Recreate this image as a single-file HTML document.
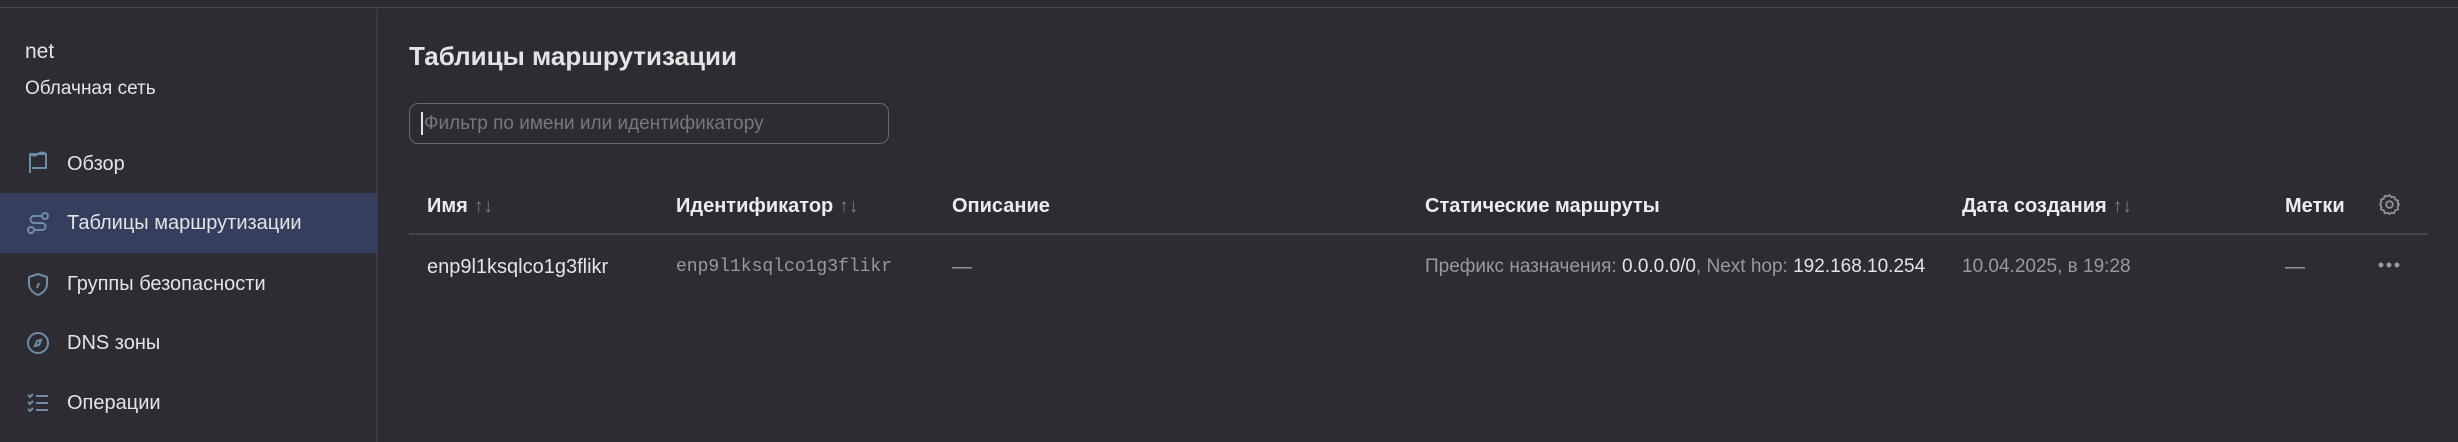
<!DOCTYPE html>
<html><head><meta charset="utf-8"><style>
*{margin:0;padding:0;box-sizing:border-box}
body{width:2458px;height:442px;background:#2d2c33;font-family:"Liberation Sans",sans-serif;color:#e4e4e6;position:relative;overflow:hidden}
.t{position:absolute;white-space:nowrap;line-height:1}
.top{position:absolute;left:0;top:0;width:2458px;height:8px;border-bottom:1px solid #45444b;background:#2d2c33}
.side{position:absolute;left:0;top:9px;width:378px;height:433px;border-right:2px solid #3b3a41}
.act{position:absolute;left:0;top:193px;width:377px;height:60px;background:#353e5c}
.ic{position:absolute;left:26px;width:24px;height:24px}
.h{font-weight:bold;font-size:20px;color:#ececee}
.s{color:#7d7c82;font-size:19px;margin-left:6px;font-weight:normal}
.g{color:#9a999f}
</style></head><body>
<div class="top"></div>
<div class="side"></div>
<div class="act"></div>
<div class="t" style="left:25px;top:41px;font-size:21px">net</div>
<div class="t" style="left:25px;top:79px;font-size:19px">Облачная сеть</div>

<svg class="ic" style="top:151px" viewBox="0 0 24 24" fill="none" stroke="#6f8ca7" stroke-width="2"><path d="M4 22V3h16v14H6" stroke-linejoin="round"/><path d="M4 3c3 2 5 2 8 0s5-2 8 0"/></svg>
<div class="t" style="left:67px;top:154px;font-size:20px">Обзор</div>

<svg class="ic" style="top:211px" viewBox="0 0 24 24" fill="none" stroke="#6f8ca7" stroke-width="2"><circle cx="19" cy="5" r="3"/><circle cx="5" cy="19" r="3"/><path d="M16 5H8a3.5 3.5 0 000 7h8a3.5 3.5 0 010 7H8"/></svg>
<div class="t" style="left:67px;top:213px;font-size:20px">Таблицы маршрутизации</div>

<svg class="ic" style="top:272px" viewBox="0 0 24 24" fill="none" stroke="#6f8ca7" stroke-width="2"><path d="M12 2l9 3v7c0 5-4 9-9 11-5-2-9-6-9-11V5z" stroke-linejoin="round"/><path d="M13 11l-2 5"/></svg>
<div class="t" style="left:67px;top:274px;font-size:20px">Группы безопасности</div>

<svg class="ic" style="top:331px" viewBox="0 0 24 24" fill="none" stroke="#6f8ca7" stroke-width="2"><circle cx="12" cy="12" r="10"/><path d="M15 9l-2 5-4 1 2-5z"/></svg>
<div class="t" style="left:67px;top:333px;font-size:20px">DNS зоны</div>

<svg class="ic" style="top:391px" viewBox="0 0 24 24" fill="none" stroke="#6f8ca7" stroke-width="2"><path d="M2 4l2 2 3-3M2 11l2 2 3-3M2 18l2 2 3-3M10 5h12M10 12h12M10 19h12"/></svg>
<div class="t" style="left:67px;top:393px;font-size:20px">Операции</div>

<div class="t" style="left:409px;top:43px;font-size:26px;font-weight:bold">Таблицы маршрутизации</div>
<div style="position:absolute;left:409px;top:103px;width:480px;height:41px;border:1px solid #68676d;border-radius:9px"></div>
<div style="position:absolute;left:421px;top:112px;width:2px;height:23px;background:#e4e4e6"></div>
<div class="t g" style="left:424px;top:114px;font-size:19px;color:#78777d">Фильтр по имени или идентификатору</div>

<div class="t h" style="left:427px;top:196px">Имя<span class="s">↑↓</span></div>
<div class="t h" style="left:676px;top:196px">Идентификатор<span class="s">↑↓</span></div>
<div class="t h" style="left:952px;top:196px">Описание</div>
<div class="t h" style="left:1425px;top:196px">Статические маршруты</div>
<div class="t h" style="left:1962px;top:196px">Дата создания<span class="s">↑↓</span></div>
<div class="t h" style="left:2285px;top:196px">Метки</div>
<svg style="position:absolute;left:2378px;top:193px" width="23" height="23" viewBox="0 0 24 24" fill="none" stroke="#8e8d93" stroke-width="2"><circle cx="12" cy="12" r="3.5"/><path d="M12 2l2 2.5 3-.5 1 3 3 1-.5 3L22 12l-1.5 2 .5 3-3 1-1 3-3-.5L12 22l-2-1.5-3 .5-1-3-3-1 .5-3L2 12l1.5-2L3 7l3-1 1-3 3 .5z" stroke-linejoin="round"/></svg>
<div style="position:absolute;left:409px;top:233px;width:2019px;height:2px;background:#45444b"></div>

<div class="t" style="left:427px;top:257px;font-size:20px">enp9l1ksqlco1g3flikr</div>
<div class="t g" style="left:676px;top:258px;font-size:18px;font-family:'Liberation Mono',monospace">enp9l1ksqlco1g3flikr</div>
<div class="t g" style="left:952px;top:257px;font-size:20px">—</div>
<div class="t" style="left:1425px;top:257px;font-size:19px"><span class="g">Префикс назначения: </span>0.0.0.0/0<span class="g">, Next hop: </span>192.168.10.254</div>
<div class="t g" style="left:1962px;top:257px;font-size:19px">10.04.2025, в 19:28</div>
<div class="t g" style="left:2285px;top:257px;font-size:20px">—</div>
<svg style="position:absolute;left:2378px;top:261px" width="22" height="8" viewBox="0 0 22 8" fill="#9a999f"><circle cx="3" cy="4" r="2.5"/><circle cx="11" cy="4" r="2.5"/><circle cx="19" cy="4" r="2.5"/></svg>
</body></html>
